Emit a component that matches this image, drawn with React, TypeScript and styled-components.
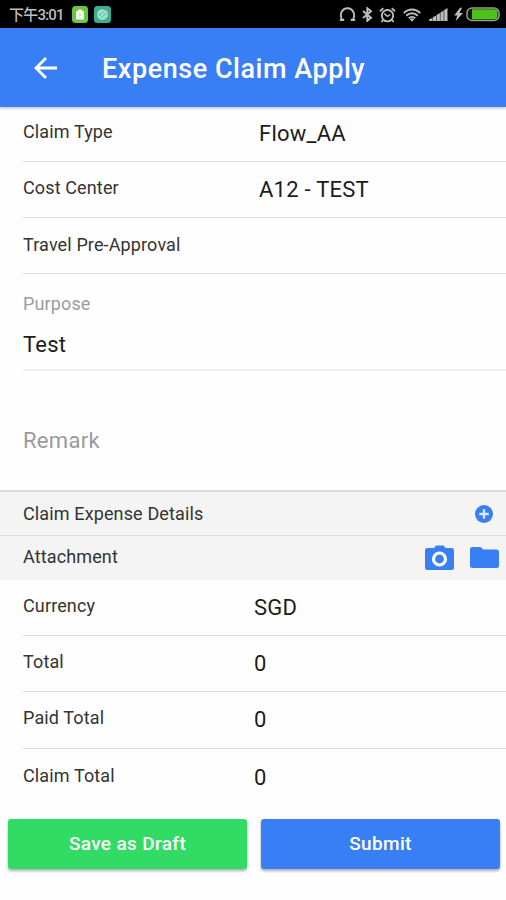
import React from 'react';
import styled, { createGlobalStyle } from 'styled-components';

const Global = createGlobalStyle`
  * { box-sizing: border-box; }
  body { margin: 0; background: #fff; font-family: Roboto, "Noto Sans CJK SC", sans-serif; }
`;

const Screen = styled.main`
  width: 506px;
  height: 900px;
  overflow: hidden;
  background: #fefefe;
  color: #222;
`;

const StatusBar = styled.header`
  height: 28px;
  background: #000;
  display: flex;
  align-items: center;
  justify-content: space-between;
  padding: 1px 6px 0 9px;
`;

const StatusGroup = styled.div`
  display: flex;
  align-items: center;
  gap: 6px;
  svg { display: block; }
`;

const IndicatorGroup = styled(StatusGroup)`
  svg:nth-child(4) { margin: 0 2px 0 1px; }
  svg:nth-child(6) { margin-right: -3px; }
`;

const Clock = styled.span`
  width: 57px;
  color: #bdbdbd;
  font-size: 15px;
  line-height: 20px;
  font-weight: 500;
  letter-spacing: -0.8px;
  white-space: nowrap;
`;

const Toolbar = styled.nav`
  height: 79px;
  background: #387ef5;
  display: flex;
  align-items: center;
  padding-left: 34px;
  color: #fff;
  box-shadow: 0 2px 2px rgba(60, 60, 40, 0.22);
  svg { display: block; }
`;

const Title = styled.h1`
  margin: 2px 0 0 44px;
  font-size: 27px;
  line-height: 34px;
  font-weight: 500;
  letter-spacing: 0.54px;
  white-space: nowrap;
`;

const Row = styled.div<{ $height: number; $value: number; $top: number; $last?: boolean }>`
  margin-left: 23px;
  height: ${p => p.$height}px;
  padding-top: ${p => p.$top}px;
  display: grid;
  grid-template-columns: ${p => p.$value - 23}px 1fr;
  border-bottom: ${p => (p.$last ? 'none' : '1px solid #dcdcdc')};
`;

const Label = styled.span<{ $muted?: boolean }>`
  font-size: 18px;
  line-height: 24px;
  letter-spacing: 0.13px;
  white-space: nowrap;
  color: ${p => (p.$muted ? '#9c9c9c' : '#333')};
`;

const Value = styled.span`
  font-size: 22px;
  line-height: 26px;
  letter-spacing: 0.25px;
  color: #1c1c1c;
  white-space: nowrap;
`;

const RowValue = styled(Value)`
  padding-top: 1px;
`;

const Field = styled.div`
  margin-left: 23px;
  height: 97px;
  padding-top: 18px;
  display: flex;
  flex-direction: column;
  gap: 16px;
  border-bottom: 2px solid #ececec;
`;

const Remark = styled.div`
  height: 119px;
  padding: 57px 0 0 23px;
  font-size: 22px;
  line-height: 26px;
  letter-spacing: 0.3px;
  color: #9a9a9a;
`;

const Section = styled.div<{ $height: number; $border: number; $lift?: number }>`
  height: ${p => p.$height}px;
  border-top: ${p => p.$border}px solid #dbdbdb;
  background: #f4f4f4;
  display: flex;
  align-items: center;
  justify-content: space-between;
  padding: 0 7px 0 23px;
  svg { display: block; }
  ${Label} { margin-bottom: ${p => p.$lift ?? 0}px; }
`;

const Icons = styled.div<{ $right?: number }>`
  display: flex;
  align-items: center;
  gap: 16px;
  padding-right: ${p => p.$right ?? 0}px;
`;

const Actions = styled.footer`
  display: grid;
  grid-template-columns: 239px 239px;
  column-gap: 14px;
  padding: 14px 0 0 8px;
`;

const Button = styled.button<{ $color: string }>`
  height: 50px;
  padding: 0 0 1px;
  border: 0;
  border-radius: 3px;
  background: ${p => p.$color};
  color: #fff;
  font: 500 19px/25px Roboto, sans-serif;
  letter-spacing: 0.35px;
  box-shadow: 0 2px 3px rgba(0, 0, 0, 0.32);
`;

const GREY = '#bcbcbc';
const BLUE = '#387ef5';

const BatteryApp = () => (
  <svg width="16" height="17" viewBox="0 0 16 17">
    <rect width="16" height="17" rx="3.5" fill="#6cc644" />
    <path d="M4 5h2V3.4h4V5h2v8.5H4z" fill="#f4fbe9" />
    <path d="m8.600 6.500-2 2.700h1.200l-.4 2.300 2.100-3H8.300z" fill="#b6e29a" />
  </svg>
);
const SyncApp = () => (
  <svg width="17" height="17" viewBox="0 0 17 17">
    <rect width="17" height="17" rx="3.500" fill="#3fae90" />
    <circle cx="8.500" cy="8.500" r="4.700" fill="#78cdb5" stroke="#b4e5d6" strokeWidth="1.300" />
    <path d="m5.300 11.500 6.400-6M5.500 7l3-2M8.500 12l3.200-2.500" stroke="#d3f0e8" strokeWidth="1" fill="none" />
  </svg>
);
const Headset = () => (
  <svg width="17" height="15" viewBox="0 0 17 15" fill="none" stroke={GREY}>
    <path d="M2.800 12C.3 7 3.200 1.200 8.500 1.200S16.700 7 14.200 12" strokeWidth="1.900" />
    <path d="M.8 12.800h4.400M11.800 12.800h4.400" strokeWidth="2.200" />
  </svg>
);
const Bluetooth = () => (
  <svg width="11" height="15" viewBox="0 0 11 15" fill="none" stroke={GREY} strokeWidth="2">
    <path d="m1 4 8 6.800-3.700 3V1.300L9 4.300 1 11" />
  </svg>
);
const Alarm = () => (
  <svg width="17" height="16" viewBox="0 0 17 16" fill="none" stroke={GREY}>
    <circle cx="8.500" cy="8.700" r="5.700" strokeWidth="1.900" />
    <path d="m5.200 6.700 3.300 2.700 2.800-1.900" strokeWidth="1.500" />
    <path d="M1 4.200 4.300 1.300M16 4.200l-3.300-2.900M3.800 13l-1.300 2M13.200 13l1.300 2" strokeWidth="1.800" />
  </svg>
);
const Wifi = () => (
  <svg width="18" height="14" viewBox="0 0 18 14" fill="none" stroke={GREY} strokeWidth="2">
    <path d="M.8 5C5.500.3 12.500.3 17.200 5M3.300 7.700c3.200-3.200 8.200-3.200 11.400 0M5.800 10.300c1.800-1.800 4.600-1.800 6.400 0" />
    <path d="M6.800 11.200Q9 9.500 11.200 11.200L9 13.700Z" fill={GREY} stroke="none" />
  </svg>
);
const Signal = () => (
  <svg width="19" height="13" viewBox="0 0 19 13" fill={GREY}>
    <path d="M0 13v-1.500L3.300 10v3zM3.800 13V9.300l3.300-1.800V13zM7.600 13V7l3.300-2v8zM11.400 13V4.500l3.300-2V13zM15.200 13V2L18.500 0v13z" />
  </svg>
);
const Bolt = () => (
  <svg width="9" height="15" viewBox="0 0 9 15" fill={GREY}>
    <path d="M6 .8.200 8.600h3L1.600 14.200 9 6H5.500L8 .8z" />
  </svg>
);
const Battery = () => (
  <svg width="34" height="15" viewBox="0 0 34 15">
    <rect x="1" y="1" width="32" height="12.500" rx="5" fill="#0b1600" stroke="#9b9b9b" strokeWidth="1.500" />
    <path d="M6 2.300h22.500q3 0 3 3v4q0 3-3 3H6z" fill="#4cc417" />
  </svg>
);
const BackArrow = () => (
  <svg width="24" height="24" viewBox="0 0 24 24" fill="none" stroke="#fff" strokeWidth="2.800">
    <path d="M12 2 2 12l10 10M2 12h21" />
  </svg>
);
const PlusCircle = () => (
  <svg width="18" height="18" viewBox="0 0 18 18">
    <circle cx="9" cy="9" r="9" fill={BLUE} />
    <path d="M9 4.200v9.600M4.200 9h9.600" stroke="#dbe8ff" strokeWidth="2.400" />
  </svg>
);
const Camera = () => (
  <svg width="29" height="26" viewBox="0 0 29 26">
    <path d="M2.500 3H9l2-2.500h7.500l2 2.500h6Q29 3 29 5.500v17q0 2.500-2.500 2.500h-24Q0 25 0 22.500v-17Q0 3 2.500 3Z" fill={BLUE} />
    <circle cx="14.500" cy="14" r="6" fill={BLUE} stroke="#fff" strokeWidth="3.200" />
  </svg>
);
const Folder = () => (
  <svg width="29" height="22" viewBox="0 0 29 22">
    <path d="M2.500 0h7.300q1.200 0 2 .9l1.400 1.700h13.300q2.500 0 2.500 2.500v13.400q0 2.500-2.500 2.500h-24Q0 21 0 18.500v-16Q0 0 2.500 0Z" fill={BLUE} />
  </svg>
);

const claimRows = [
  { label: 'Claim Type', value: 'Flow_AA', height: 55, top: 13 },
  { label: 'Cost Center', value: 'A12 - TEST', height: 56, top: 14 },
  { label: 'Travel Pre-Approval', value: '', height: 56, top: 15 },
];

const totalRows = [
  { label: 'Currency', value: 'SGD', height: 56, top: 14 },
  { label: 'Total', value: '0', height: 56, top: 14 },
  { label: 'Paid Total', value: '0', height: 57, top: 14 },
  { label: 'Claim Total', value: '0', height: 56, top: 15, last: true },
];

export default function App() {
  return (
    <>
      <Global />
      <Screen>
        <StatusBar>
          <StatusGroup>
            <Clock>下午3:01</Clock>
            <BatteryApp />
            <SyncApp />
          </StatusGroup>
          <IndicatorGroup>
            <Headset />
            <Bluetooth />
            <Alarm />
            <Wifi />
            <Signal />
            <Bolt />
            <Battery />
          </IndicatorGroup>
        </StatusBar>
        <Toolbar>
          <BackArrow />
          <Title>Expense Claim Apply</Title>
        </Toolbar>
        {claimRows.map(r => (
          <Row key={r.label} $height={r.height} $top={r.top} $value={259}>
            <Label>{r.label}</Label>
            <RowValue>{r.value}</RowValue>
          </Row>
        ))}
        <Field>
          <Label $muted>Purpose</Label>
          <Value>Test</Value>
        </Field>
        <Remark>Remark</Remark>
        <Section $height={45} $border={2}>
          <Label>Claim Expense Details</Label>
          <Icons $right={6}>
            <PlusCircle />
          </Icons>
        </Section>
        <Section $height={45} $border={1} $lift={2}>
          <Label>Attachment</Label>
          <Icons>
            <Camera />
            <Folder />
          </Icons>
        </Section>
        {totalRows.map(r => (
          <Row key={r.label} $height={r.height} $top={r.top} $value={254} $last={r.last}>
            <Label>{r.label}</Label>
            <RowValue>{r.value}</RowValue>
          </Row>
        ))}
        <Actions>
          <Button $color="#32db64">Save as Draft</Button>
          <Button $color={BLUE}>Submit</Button>
        </Actions>
      </Screen>
    </>
  );
}
